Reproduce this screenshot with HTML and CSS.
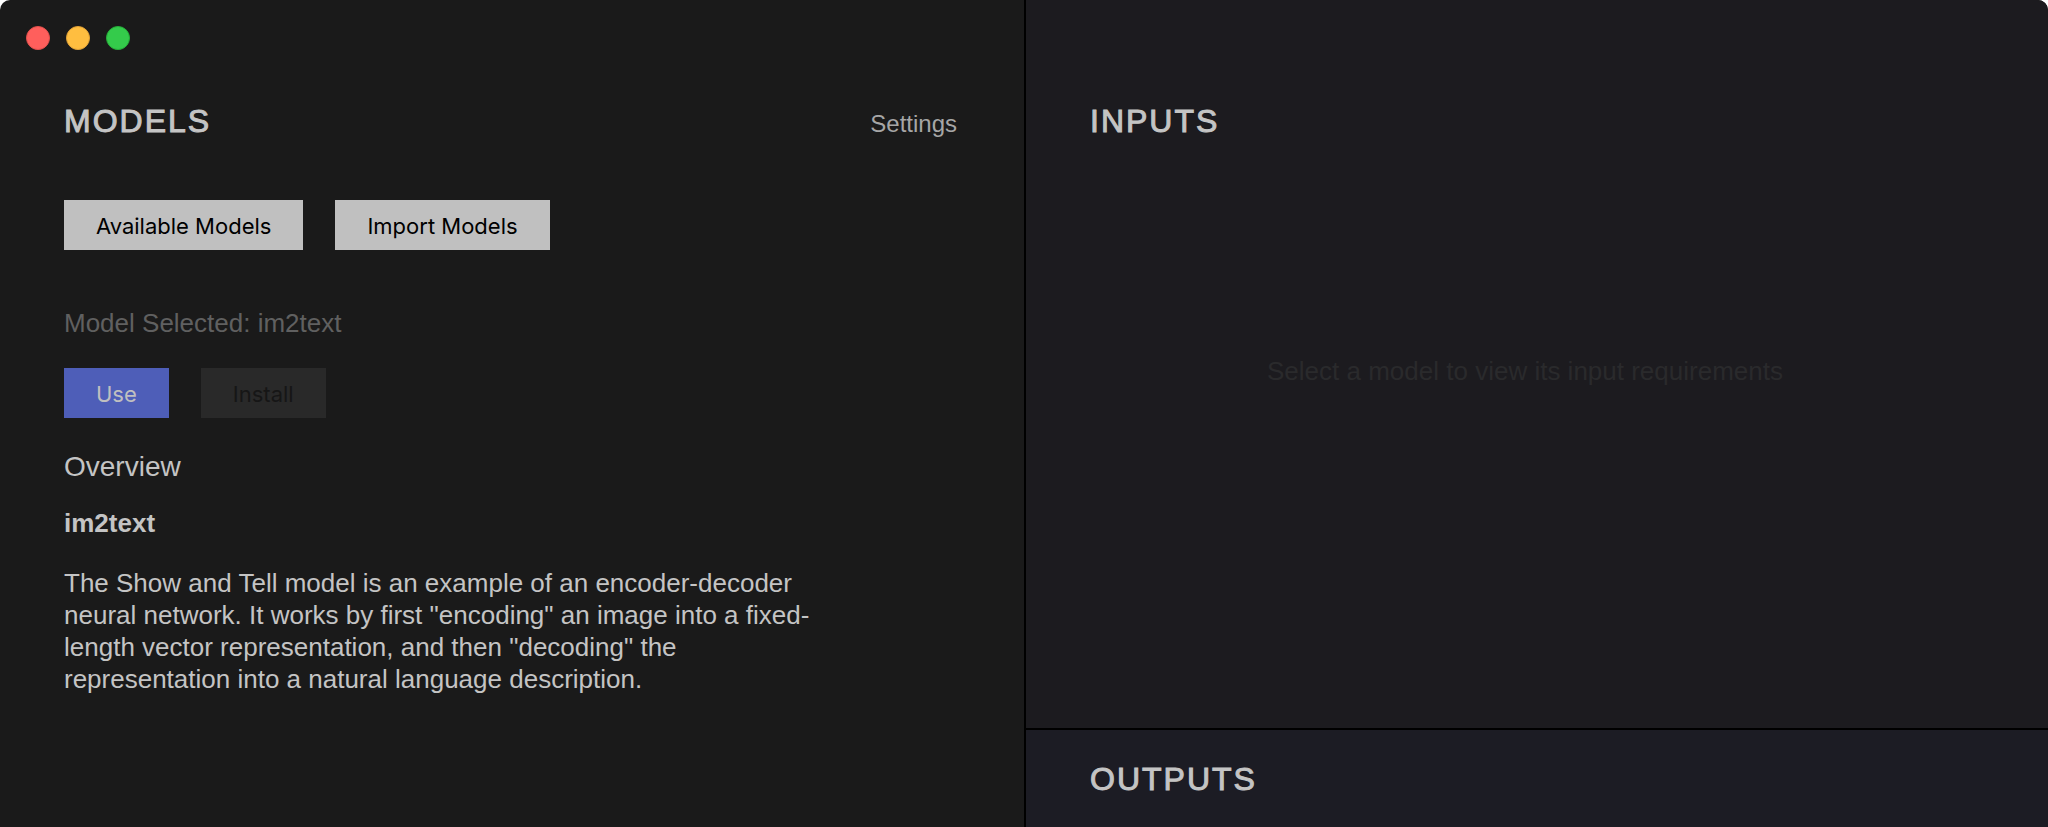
FILE: index.html
```html
<!DOCTYPE html>
<html lang="en">
<head>
<meta charset="utf-8">
<title>Models</title>
<link rel="stylesheet" href="styles.css">
</head>
<body>
<div class="window">
  <main class="pane models">
    <div class="traffic">
      <button class="light close" aria-label="Close"></button>
      <button class="light minimize" aria-label="Minimize"></button>
      <button class="light zoom" aria-label="Zoom"></button>
    </div>
    <header class="pane-header">
      <h1 class="title">MODELS</h1>
      <a class="settings" href="#settings">Settings</a>
    </header>
    <div class="actions sources">
      <button class="button">Available Models</button>
      <button class="button">Import Models</button>
    </div>
    <p class="selected">Model Selected: im2text</p>
    <div class="actions">
      <button class="button primary">Use</button>
      <button class="button muted" disabled>Install</button>
    </div>
    <section class="overview">
      <h2 class="subtitle">Overview</h2>
      <h3 class="name">im2text</h3>
      <p class="description">The Show and Tell model is an example of an encoder-decoder neural network. It works by first "encoding" an image into a fixed-length vector representation, and then "decoding" the representation into a natural language description.</p>
    </section>
  </main>
  <div class="side">
    <section class="pane inputs">
      <h1 class="title">INPUTS</h1>
      <p class="empty">Select a model to view its input requirements</p>
    </section>
    <section class="pane outputs">
      <h1 class="title">OUTPUTS</h1>
    </section>
  </div>
</div>
</body>
</html>
```
FILE: styles.css
```css
* { box-sizing: border-box; }
body {
  margin: 0;
  background: #fff;
  color: #c4c4c4;
  font: 26px/32px "Liberation Sans", Arial, sans-serif;
}
h1, h2, h3, p { margin: 0; }
.window {
  display: grid;
  grid-template-columns: 1fr 1fr;
  min-height: 100vh;
  border-radius: 10px 10px 0 0;
  overflow: hidden;
  background: #1a1a1a;
}
.pane { padding: 0 64px; }
.models { padding-right: 67px; }
.traffic {
  display: flex;
  gap: 16px;
  margin-left: -38px;
  padding: 26px 0 50px;
}
.light {
  width: 24px;
  height: 24px;
  padding: 0;
  border: 1px solid #e2504c;
  border-radius: 50%;
  background: #ff5f5c;
}
.minimize { border-color: #e0a136; background: #ffbe40; }
.zoom { border-color: #25ae38; background: #34cb4b; }
.pane-header {
  display: flex;
  justify-content: space-between;
  align-items: baseline;
}
.title {
  font-size: 32px;
  font-weight: 400;
  line-height: 42px;
  letter-spacing: 2px;
  -webkit-text-stroke: 1px currentColor;
}
.settings {
  color: #a6a6a6;
  font-size: 24px;
  text-decoration: none;
}
.actions { display: flex; gap: 32px; }
.sources { margin: 58px 0 57px; }
.button {
  height: 50px;
  padding: 2px 32px 0;
  border: 0;
  background: #c0c0c0;
  color: #000;
  font: 22px/32px Inter, sans-serif;
}
.primary { background: #4e5eb8; color: #c0c0c0; }
.muted { background: #292929; color: #161616; }
.selected { margin-bottom: 29px; color: #606060; }
.overview { max-width: 768px; padding: 33px 0; }
.subtitle { margin-bottom: 24px; font-size: 28px; font-weight: 400; }
.name { margin-bottom: 28px; font-size: 26px; }
.side {
  display: flex;
  flex-direction: column;
  border-left: 2px solid #000;
}
.inputs {
  flex: 1;
  padding-top: 100px;
  padding-right: 88px;
  background: #1c1b1f;
}
.empty { margin-top: 213px; color: #2a2a2c; text-align: center; }
.outputs {
  padding-top: 28px;
  padding-bottom: 27px;
  border-top: 2px solid #000;
  background: #1c1c24;
}
```
